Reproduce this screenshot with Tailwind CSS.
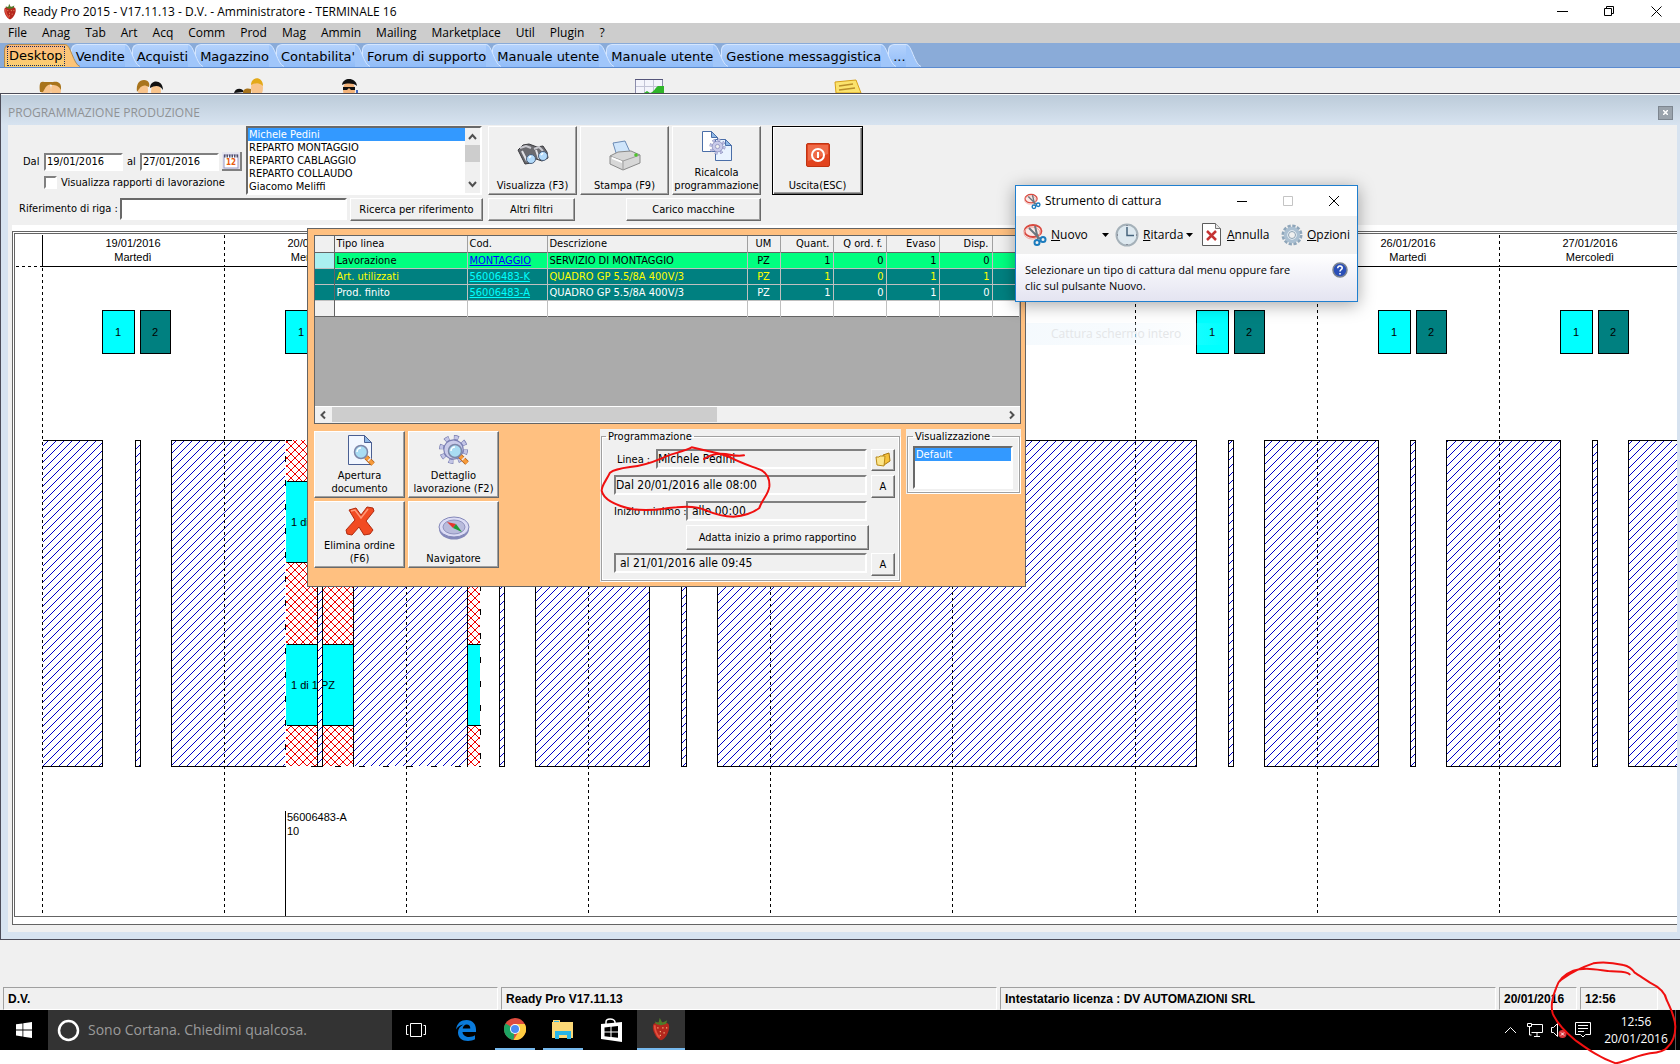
<!DOCTYPE html>
<html lang="it">
<head>
    <meta charset="UTF-8">
    <meta name="viewport" content="width=device-width, initial-scale=1.0">
    <title>Ready Pro 2015</title>
    <script src="https://cdn.jsdelivr.net/npm/@tailwindcss/browser@4"></script>
</head>
<body class="bg-white">
<div class="relative flex min-h-screen flex-col overflow-hidden pb-[14px] font-['DejaVu_Sans_Condensed','DejaVu_Sans',sans-serif] text-[11px] leading-[13px] text-black">

    <!-- Shared icons -->
    <svg class="hidden">
        <symbol id="strawberry" viewBox="0 0 16 18">
            <path d="M2 5C0 9 4 17 8 18c4-1 8-9 6-13-2-2-10-2-12 0z" fill="#b5271d"/>
            <path d="M3 6c0 4 2 8 4 10" stroke="#e2503f" stroke-width="1.5" fill="none"/>
            <path d="M3 3l3 1 1-4 2 4 4-2-1 3-4 1-4-1z" fill="#4d7d2a"/>
            <path d="M5 8h1M9 8h1M12 8h1M7 11h1M10 12h1M7 14h1" stroke="#f3b27c"/>
        </symbol>
        <symbol id="gear" viewBox="0 0 32 32">
            <circle cx="16" cy="16" r="12.500" fill="none" stroke="#7378ad" stroke-width="5" stroke-dasharray="4.900 4.920"/>
            <circle cx="16" cy="16" r="12.500" fill="none" stroke="#c3c5e6" stroke-width="3.500" stroke-dasharray="3.900 5.920" stroke-dashoffset="-.5"/>
            <circle cx="16" cy="16" r="10" fill="#c9cbea" stroke="#7a7eb2" stroke-width="1.200"/>
            <circle cx="16" cy="16" r="4" fill="#f0f0f0" stroke="#7a7eb2" stroke-width="1.200"/>
        </symbol>
        <symbol id="lens" viewBox="0 0 22 22">
            <path d="M13 13l7 7" stroke="#b05a10" stroke-width="5"/>
            <path d="M13 13l7 7" stroke="#f79b3a" stroke-width="3.500"/>
            <path d="M15 17l3-3" stroke="#e8e8f8" stroke-width="1.500"/>
            <circle cx="8" cy="8" r="6.500" fill="#a9dcf3" stroke="#7c86a8" stroke-width="1.500"/>
            <path d="M4 8a4 4 0 0 1 4-4" stroke="#fff" stroke-width="1.500" fill="none"/>
        </symbol>
        <symbol id="snip" viewBox="0 0 24 24">
            <ellipse cx="10" cy="8" rx="8.500" ry="6" fill="#fbe9e7" stroke="#d9493f" stroke-width="1.800"/>
            <ellipse cx="9" cy="10" rx="8" ry="6" fill="none" stroke="#f0aaa4" stroke-width="1"/>
            <path d="M6 5l11 11M12 3l3 13" stroke="#6d7880" stroke-width="2"/>
            <circle cx="14" cy="19.500" r="2.500" fill="none" stroke="#1b7bbd" stroke-width="2"/>
            <circle cx="20" cy="16.500" r="2.500" fill="none" stroke="#1b7bbd" stroke-width="2"/>
        </symbol>
    </svg>

    <!-- Title bar -->
    <header class="flex h-[23px] items-center bg-white pl-[3px] font-['Open_Sans',sans-serif] text-xs">
        <svg class="h-[17px] w-[14px]"><use href="#strawberry"/></svg>
        <h1 class="ml-1.5 flex-1 text-xs">Ready Pro 2015 - V17.11.13 - D.V. - Amministratore - TERMINALE 16</h1>
        <div class="flex gap-9 pr-[18px]">
            <button aria-label="Riduci"><svg class="size-[11px]" fill="none" stroke="#000"><path d="M0 5.500h11"/></svg></button>
            <button aria-label="Ripristina"><svg class="size-[11px]" fill="none" stroke="#000"><path d="M.5 2.500h7v7h-7zM2.500 2.500v-2h7v7h-2"/></svg></button>
            <button aria-label="Chiudi"><svg class="size-[11px]" fill="none" stroke="#000"><path d="M.5.5l10 10M10.500.5l-10 10"/></svg></button>
        </div>
    </header>

    <!-- Menu -->
    <nav class="flex h-5 items-center gap-[15px] bg-[#cdcdcd] pl-2 font-['Open_Sans',sans-serif] text-xs">
        <a href="#">File</a><a href="#">Anag</a><a href="#">Tab</a><a href="#">Art</a><a href="#">Acq</a><a href="#">Comm</a><a href="#">Prod</a><a href="#">Mag</a><a href="#">Ammin</a><a href="#">Mailing</a><a href="#">Marketplace</a><a href="#">Util</a><a href="#">Plugin</a><a href="#">?</a>
    </nav>

    <!-- Tabs -->
    <nav class="isolate flex h-[25px] items-end border-b border-[#5b8bd0] bg-[#8aabd8] pl-1 font-['DejaVu_Sans',sans-serif] text-[13px]">
        <button class="relative z-[10] flex h-[23px]"><span class="h-full rounded-tl-md border-t border-l border-[#b08a50] bg-linear-to-b from-[#fdb97c] to-[#fbd070] pt-px pl-0.5"><span class="block border border-dotted border-[#1a2a60] px-px leading-[18px]">Desktop</span></span><svg class="-mr-[10px] h-[23px] w-4"><path d="M0 0C6 0 8 20 15 23H0z" fill="#fcc477"/><path d="M0 .5C6 .5 8 20 15 22.500" fill="none" stroke="#b08a50"/></svg></button>
        <button class="relative z-[9] flex h-[23px]"><span class="h-full rounded-tl-md border-t border-l border-[#d4e6ff] bg-linear-to-b from-[#b4d2fc] to-[#90bcf8] pl-1 leading-[23px]">Vendite</span><svg class="-mr-[9px] h-[23px] w-4"><path d="M0 0C6 0 8 20 15 23H0z" fill="#a0c6fa"/><path d="M0 .5C6 .5 8 20 15 22.500" fill="none" stroke="#d4e6ff"/></svg></button>
        <button class="relative z-[8] flex h-[23px]"><span class="h-full rounded-tl-md border-t border-l border-[#d4e6ff] bg-linear-to-b from-[#b4d2fc] to-[#90bcf8] pl-1 leading-[23px]">Acquisti</span><svg class="-mr-[9px] h-[23px] w-4"><path d="M0 0C6 0 8 20 15 23H0z" fill="#a0c6fa"/><path d="M0 .5C6 .5 8 20 15 22.500" fill="none" stroke="#d4e6ff"/></svg></button>
        <button class="relative z-[7] flex h-[23px]"><span class="h-full rounded-tl-md border-t border-l border-[#d4e6ff] bg-linear-to-b from-[#b4d2fc] to-[#90bcf8] pl-1 leading-[23px]">Magazzino</span><svg class="-mr-[9px] h-[23px] w-4"><path d="M0 0C6 0 8 20 15 23H0z" fill="#a0c6fa"/><path d="M0 .5C6 .5 8 20 15 22.500" fill="none" stroke="#d4e6ff"/></svg></button>
        <button class="relative z-[6] flex h-[23px]"><span class="h-full rounded-tl-md border-t border-l border-[#d4e6ff] bg-linear-to-b from-[#b4d2fc] to-[#90bcf8] pl-1 leading-[23px]">Contabilita'</span><svg class="-mr-[9px] h-[23px] w-4"><path d="M0 0C6 0 8 20 15 23H0z" fill="#a0c6fa"/><path d="M0 .5C6 .5 8 20 15 22.500" fill="none" stroke="#d4e6ff"/></svg></button>
        <button class="relative z-[5] flex h-[23px]"><span class="h-full rounded-tl-md border-t border-l border-[#d4e6ff] bg-linear-to-b from-[#b4d2fc] to-[#90bcf8] pl-1 leading-[23px]">Forum di supporto</span><svg class="-mr-[10px] h-[23px] w-4"><path d="M0 0C6 0 8 20 15 23H0z" fill="#a0c6fa"/><path d="M0 .5C6 .5 8 20 15 22.500" fill="none" stroke="#d4e6ff"/></svg></button>
        <button class="relative z-[4] flex h-[23px]"><span class="h-full rounded-tl-md border-t border-l border-[#d4e6ff] bg-linear-to-b from-[#b4d2fc] to-[#90bcf8] pl-1 leading-[23px]">Manuale utente</span><svg class="-mr-[9px] h-[23px] w-4"><path d="M0 0C6 0 8 20 15 23H0z" fill="#a0c6fa"/><path d="M0 .5C6 .5 8 20 15 22.500" fill="none" stroke="#d4e6ff"/></svg></button>
        <button class="relative z-[3] flex h-[23px]"><span class="h-full rounded-tl-md border-t border-l border-[#d4e6ff] bg-linear-to-b from-[#b4d2fc] to-[#90bcf8] pl-1 leading-[23px]">Manuale utente</span><svg class="-mr-[8px] h-[23px] w-4"><path d="M0 0C6 0 8 20 15 23H0z" fill="#a0c6fa"/><path d="M0 .5C6 .5 8 20 15 22.500" fill="none" stroke="#d4e6ff"/></svg></button>
        <button class="relative z-[2] flex h-[23px]"><span class="h-full rounded-tl-md border-t border-l border-[#d4e6ff] bg-linear-to-b from-[#b4d2fc] to-[#90bcf8] pl-1 leading-[23px]">Gestione messaggistica</span><svg class="-mr-[9px] h-[23px] w-4"><path d="M0 0C6 0 8 20 15 23H0z" fill="#a0c6fa"/><path d="M0 .5C6 .5 8 20 15 22.500" fill="none" stroke="#d4e6ff"/></svg></button>
        <button class="relative z-[1] flex h-[23px]"><span class="h-full rounded-tl-md border-t border-l border-[#d4e6ff] bg-linear-to-b from-[#b4d2fc] to-[#90bcf8] pl-1 leading-[23px]">...</span><svg class="-mr-[9px] h-[23px] w-4"><path d="M0 0C6 0 8 20 15 23H0z" fill="#a0c6fa"/><path d="M0 .5C6 .5 8 20 15 22.500" fill="none" stroke="#d4e6ff"/></svg></button>
    </nav>

    <!-- Desktop icons, cut by the child window -->
    <svg class="h-[25px] w-full bg-[#f0f0f0]">
        <g stroke-width=".6">
            <ellipse cx="46" cy="22" rx="5" ry="8" fill="#f8c48c"/><path d="M40 24c-1-8 0-11 4-10h8c3 1 2 3 1 3-5-2-7 1-10 7z" fill="#a8741c"/>
            <ellipse cx="56" cy="22" rx="5" ry="8" fill="#f8c48c"/><path d="M51 15c3-2 10-2 10 4v3c-2-4-5-5-9-5z" fill="#a8741c"/>
            <ellipse cx="143" cy="22" rx="5" ry="8" fill="#f8c48c"/><path d="M137 24c-1-8 2-12 7-12s6 4 5 7c-5-3-8-2-12 5z" fill="#a8741c"/>
            <ellipse cx="156" cy="23" rx="5" ry="7" fill="#f8c48c"/><path d="M150 20c0-9 13-9 13 2-3-5-8-5-13-2z" fill="#111"/>
            <path d="M234 25c1-5 8-6 10-1z" fill="#111"/><path d="M243 25c0-5 5-5 8-4v4z" fill="#a8741c"/>
            <ellipse cx="257" cy="20" rx="6" ry="9" fill="#f8c48c"/><path d="M251 17c0-9 12-9 12 1-4-4-8-3-12-1z" fill="#e3a919"/>
            <ellipse cx="349" cy="22" rx="6" ry="9" fill="#f2b279"/><path d="M342 17c1-8 14-8 15 1-4-3-10-3-15-1z" fill="#111"/><path d="M343 19h12v3h-4l-2-2-2 2h-4z" fill="#111"/><path d="M356 22h2v3h-2z" fill="#456ac0"/>
        </g>
        <path d="M635.500 11.500h27v14h-27z" fill="#f4f4fb" stroke="#8b8cab"/>
        <path d="M644.500 12v13M653.500 12v13M636 18.500h26" stroke="#c3c4d6"/>
        <path d="M635 11.500h28" stroke="#55557a"/>
        <path d="M644 25l3-2 3 2c4-1 5-5 8-7h6v7z" fill="#2fb529"/>
        <path d="M835 14l21-2 5 13h-25z" fill="#fbe36c" stroke="#d6a019"/>
        <path d="M839 18l14-2M839 22l16-2" stroke="#b98f2b" stroke-width="1.500"/>
    </svg>

    <!-- Child window -->
    <main class="flex flex-1 flex-col border-y border-l border-[#4c4c58] bg-[#d7e3f0]">
        <div class="flex h-[31px] items-center border-t border-white bg-linear-to-b from-[#bccbd9] to-[#d7e3f0] pt-[5px] pr-[7px] pl-[7px] font-['Open_Sans',sans-serif]">
            <h2 class="flex-1 text-xs text-[#8f9295]">PROGRAMMAZIONE PRODUZIONE</h2>
            <button aria-label="Chiudi finestra" class="flex h-3.5 w-[15px] items-center justify-center border border-[#7d8690] bg-[#9aa3ac]"><svg class="size-[5px]" stroke="#fff" stroke-width="1.500"><path d="M0 0l5 5M5 0L0 5"/></svg></button>
        </div>
        <div class="mr-[3px] mb-[7px] ml-[7px] flex flex-1 flex-col bg-[#f0f0f0] pb-[7px]">

            <!-- Toolbar -->
            <form class="flex h-[100px] flex-col gap-[3px] pt-px">
                <div class="flex h-[69px]">
                    <div class="w-[238px] shrink-0 pt-[26px] pl-[15px]">
                        <div class="flex h-[19px] items-center">
                            <label for="from" class="w-[21px]">Dal</label>
                            <input id="from" value="19/01/2016" class="h-[18px] w-[79px] border-2 border-t-[#808080] border-r-white border-b-white border-l-[#808080] bg-white px-px">
                            <label for="to" class="w-[17px] pl-1">al</label>
                            <input id="to" value="27/01/2016" class="h-[18px] w-[79px] border-2 border-t-[#808080] border-r-white border-b-white border-l-[#808080] bg-white px-px">
                            <button type="button" aria-label="Calendario" class="ml-[3px] flex h-[19px] w-5 items-center justify-center border-r-2 border-b-2 border-[#808080] bg-[#e6e6ee]">
                                <svg class="size-4"><rect x="1" y="2" width="14" height="13" fill="#fff" stroke="#9a9ac8"/><path d="M1 3h14" stroke="#50506a" stroke-width="3" stroke-dasharray="1.500 1"/><text x="3" y="12" font-size="8" font-weight="700" fill="#e85a10">12</text></svg>
                            </button>
                        </div>
                        <div class="mt-[5px] flex items-center pl-[21px]">
                            <input id="reports" type="checkbox" class="size-[13px] appearance-none border-2 border-t-[#808080] border-r-white border-b-white border-l-[#808080] bg-white">
                            <label for="reports" class="ml-1">Visualizza rapporti di lavorazione</label>
                        </div>
                    </div>
                    <div class="flex w-[236px] shrink-0 border-2 border-t-[#696969] border-r-white border-b-white border-l-[#696969] bg-white">
                        <select size="5" aria-label="Reparti" class="flex-1 overflow-hidden [scrollbar-width:none]">
                            <option selected class="min-h-0 p-0 px-px leading-[13px] checked:bg-[#3399ff] checked:bg-linear-to-b checked:from-[#3399ff] checked:to-[#3399ff] checked:text-white">Michele Pedini</option>
                            <option class="min-h-0 p-0 px-px leading-[13px]">REPARTO MONTAGGIO</option>
                            <option class="min-h-0 p-0 px-px leading-[13px]">REPARTO CABLAGGIO</option>
                            <option class="min-h-0 p-0 px-px leading-[13px]">REPARTO COLLAUDO</option>
                            <option class="min-h-0 p-0 px-px leading-[13px]">Giacomo Meliffi</option>
                        </select>
                        <div class="flex w-[15px] flex-col items-center justify-between bg-[#f0f0f0]">
                            <svg class="h-[17px] w-[15px]" fill="none" stroke="#505050" stroke-width="2"><path d="M4 11l3.500-4 3.500 4"/></svg>
                            <span class="mb-auto h-[17px] w-full bg-[#cdcdcd]"></span>
                            <svg class="h-[17px] w-[15px]" fill="none" stroke="#505050" stroke-width="2"><path d="M4 6l3.500 4L11 6"/></svg>
                        </div>
                    </div>
                    <button type="button" class="ml-1.5 flex w-[89px] flex-col items-center justify-end border border-t-white border-r-[#696969] border-b-[#696969] border-l-white bg-[#f0f0f0] pb-0.5 shadow-[inset_-1px_-1px_0_#a0a0a0]">
                        <svg class="mb-2 h-8 w-8">
                            <path d="M1 11l5-5 6-1 8 3 6-1 4 6 1 6-6 3-6-2-3-4-2 8-6 1-3-6z" fill="#6b6b70" stroke="#3a3a3e"/>
                            <path d="M3 9l6-2 5 2M17 10l5-2 4 4" stroke="#c9c9cf" stroke-width="2" fill="none"/>
                            <path d="M5 12l5 10M19 11l3 9" stroke="#e2e2e6" stroke-width="2"/>
                            <circle cx="14" cy="20" r="4.500" fill="#b3dbfb" stroke="#4c5f7a"/><circle cx="26" cy="17" r="4.500" fill="#b3dbfb" stroke="#4c5f7a"/>
                            <path d="M12 19l2-2M24 16l2-2" stroke="#fff" stroke-width="1.500"/>
                        </svg>
                        Visualizza (F3)
                    </button>
                    <button type="button" class="ml-[3px] flex w-[89px] flex-col items-center justify-end border border-t-white border-r-[#696969] border-b-[#696969] border-l-white bg-[#f0f0f0] pb-0.5 shadow-[inset_-1px_-1px_0_#a0a0a0]">
                        <svg class="mb-2 h-8 w-8">
                            <path d="M4 4l12-2 5 11-13 4z" fill="#cfe5fb" stroke="#6b8bb5"/>
                            <path d="M1 17l8-4 13-1 9 4v8l-17 7-13-6z" fill="#d7d7d7" stroke="#8a8a8a"/>
                            <path d="M1 17l13 5 17-6M14 22v9" fill="none" stroke="#9d9d9d"/>
                            <path d="M3 18l10 4v2L3 20z" fill="#fff"/><circle cx="27" cy="16" r="1.800" fill="#4fc52c"/>
                        </svg>
                        Stampa (F9)
                    </button>
                    <button type="button" class="ml-[3px] flex w-[89px] flex-col items-center justify-end border border-t-white border-r-[#696969] border-b-[#696969] border-l-white bg-[#f0f0f0] pb-0.5 shadow-[inset_-1px_-1px_0_#a0a0a0]">
                        <svg class="mb-1 h-8 w-8">
                            <path d="M1.500 1.500h9l6 6v14h-15z" fill="#fff" stroke="#4a6ea8"/><path d="M10.500 1.500v6h6z" fill="#8fb8e6" stroke="#4a6ea8"/>
                            <path d="M14.500 9.500h10l6 6v15h-16z" fill="#e9f3ff" stroke="#4a6ea8"/><path d="M24.500 9.500v6h6z" fill="#8fb8e6" stroke="#4a6ea8"/>
                            <use href="#gear" x="8" y="8" width="17" height="17"/>
                        </svg>
                        Ricalcola<br>programmazione
                    </button>
                    <button type="button" class="ml-[11px] flex w-[91px] flex-col items-center justify-end border border-black bg-[#f0f0f0] pb-0.5 shadow-[inset_1px_1px_0_#fff,inset_-1px_-1px_0_#696969,inset_-2px_-2px_0_#a0a0a0]">
                        <svg class="mb-3 h-6 w-6">
                            <rect x=".5" y=".5" width="23" height="23" rx="1.500" fill="#e2441f" stroke="#bf3413"/><path d="M2 2h20v9L2 18z" fill="#ef6b48"/>
                            <circle cx="12" cy="12" r="6" fill="none" stroke="#fff" stroke-width="2"/><path d="M12 9v6" stroke="#fff" stroke-width="2"/>
                        </svg>
                        Uscita(ESC)
                    </button>
                </div>
                <div class="flex h-6 items-start pl-[11px]">
                    <label for="ref" class="w-[101px] pt-1">Riferimento di riga :</label>
                    <input id="ref" class="h-[22px] w-[227px] border-2 border-t-[#696969] border-r-white border-b-white border-l-[#696969] bg-white px-1">
                    <button type="button" class="ml-[3px] h-[23px] w-[133px] border border-t-white border-r-[#696969] border-b-[#696969] border-l-white bg-[#f0f0f0] shadow-[inset_-1px_-1px_0_#a0a0a0]">Ricerca per riferimento</button>
                    <button type="button" class="ml-[5px] h-[23px] w-[87px] border border-t-white border-r-[#696969] border-b-[#696969] border-l-white bg-[#f0f0f0] shadow-[inset_-1px_-1px_0_#a0a0a0]">Altri filtri</button>
                    <button type="button" class="ml-[51px] h-[23px] w-[135px] border border-t-white border-r-[#696969] border-b-[#696969] border-l-white bg-[#f0f0f0] shadow-[inset_-1px_-1px_0_#a0a0a0]">Carico macchine</button>
                </div>
            </form>

            <!-- Gantt -->
            <div class="ml-1 flex flex-1 flex-col bg-white pt-1.5">
                <div class="flex-1 border-y border-l border-[#646464] pt-px pb-[7px] pl-px">
                    <div class="border-y border-l border-[#646464]">
                        <svg id="gantt" class="block h-[682px] w-full font-['Liberation_Sans',sans-serif] text-[11px]" shape-rendering="crispEdges">
                            <defs>
                                <pattern id="blue" width="8" height="8" patternUnits="userSpaceOnUse">
                                    <path d="M0 7h1v1H0zM1 6h1v1H1zM2 5h1v1H2zM3 4h1v1H3zM4 3h1v1H4zM5 2h1v1H5zM6 1h1v1H6zM7 0h1v1H7z" fill="#0000c8"/>
                                </pattern>
                                <pattern id="red" width="8" height="8" patternUnits="userSpaceOnUse">
                                    <path d="M0 7h1v1H0zM1 6h1v1H1zM2 5h1v1H2zM3 4h1v1H3zM4 3h1v1H4zM5 2h1v1H5zM6 1h1v1H6zM7 0h1v1H7zM0 0h1v1H0zM1 1h1v1H1zM2 2h1v1H2zM3 3h1v1H3zM4 4h1v1H4zM5 5h1v1H5zM6 6h1v1H6zM7 7h1v1H7z" fill="#f00000"/>
                                </pattern>
                            </defs>
                        </svg>
                    </div>
                </div>
            </div>
        </div>
    </main>
    <div class="h-[47px] bg-[#f0f0f0]"></div>

    <!-- Status bar -->
    <footer class="flex h-[23px] gap-[3px] bg-[#f0f0f0] pr-[22px] pl-[3px] font-['Liberation_Sans',sans-serif] text-xs leading-[22px] font-bold">
        <div class="w-[495px] border border-t-[#a0a0a0] border-r-white border-b-white border-l-[#a0a0a0] pl-1">D.V.</div>
        <div class="w-[496px] border border-t-[#a0a0a0] border-r-white border-b-white border-l-[#a0a0a0] pl-1">Ready Pro V17.11.13</div>
        <div class="flex-1 border border-t-[#a0a0a0] border-r-white border-b-white border-l-[#a0a0a0] pl-1">Intestatario licenza : DV AUTOMAZIONI SRL</div>
        <div class="w-[78px] border border-t-[#a0a0a0] border-r-white border-b-white border-l-[#a0a0a0] pl-1">20/01/2016</div>
        <div class="w-[78px] border border-t-[#a0a0a0] border-r-white border-b-white border-l-[#a0a0a0] pl-1">12:56</div>
    </footer>

    <!-- Taskbar -->
    <div class="flex h-10 bg-black font-['Open_Sans',sans-serif] text-white">
        <button aria-label="Start" class="flex w-12 items-center justify-center"><svg class="size-4" fill="#fff"><path d="M0 2.300L6.500 1.400v6.100H0zM7.300 1.300L16 0v7.500H7.300zM0 8.400h6.500v6.100L0 13.600zM7.300 8.400H16V16l-8.700-1.200z"/></svg></button>
        <label class="flex w-[344px] items-center bg-[#333] pl-[9px]">
            <svg class="size-[23px]"><circle cx="11.500" cy="11.500" r="9.500" fill="none" stroke="#fff" stroke-width="2.500"/></svg>
            <input aria-label="Cerca" placeholder="Sono Cortana. Chiedimi qualcosa." class="ml-2 flex-1 text-sm placeholder:text-[#9b9b9b]">
        </label>
        <button aria-label="Visualizzazione attività" class="flex w-12 items-center justify-center"><svg class="h-4 w-5" fill="none" stroke="#fff"><path d="M4.500 1.500h11v13h-11zM2.500 3.500h-2v9h2M17.500 3.500h2v9h-2"/></svg></button>
        <button aria-label="Edge" class="flex w-[51px] items-center justify-center"><svg class="h-[21px] w-5"><path d="M0 9.500C1 3 5 0 10.500 0 17 0 20 4.500 20 9.500V12H6.500c.3 3.500 3.500 5 6.500 5 2.500 0 4.500-.7 6-1.700v4C17 20.500 14.500 21 12 21 6 21 2 17.500 2 12.500 2 9 4 6 7.500 4.500 4.500 4.800 1.800 6.500 0 9.500zM6.700 8.500h7.600C14.300 6 13 4.500 10.700 4.500 8.500 4.500 7 6.200 6.700 8.500z" fill="#0a7bdc"/></svg></button>
        <button aria-label="Chrome" class="mr-2 ml-1 flex w-10 items-center justify-center border-b-2 border-[#76b9ed]"><svg class="size-[22px]"><circle cx="11" cy="11" r="11" fill="#dd4b3e"/><path d="M11 11L1.500 5.500A11 11 0 0 0 9.500 22z" fill="#1da362"/><path d="M11 6h9.800A11 11 0 0 1 9.500 22L15 13z" fill="#ffcd42"/><circle cx="11" cy="11" r="5" fill="#fff"/><circle cx="11" cy="11" r="4" fill="#4b8bf5"/></svg></button>
        <button aria-label="Esplora file" class="flex w-10 items-center justify-center border-b-2 border-[#76b9ed]"><svg class="h-[19px] w-[22px]"><path d="M0 2h1V0h7v2h13v16H0z" fill="#fbd876"/><path d="M2 1h5v1H2z" fill="#37b8e8"/><path d="M3 19v-8h16v8h-4v-4H7v4z" fill="#29b5e8"/></svg></button>
        <button aria-label="Store" class="mr-0.5 ml-1 flex w-12 items-center justify-center"><svg class="h-6 w-[21px]"><path d="M0 6l21-2v20L0 21z" fill="#fff"/><path d="M5 6V4c0-4 8-4 9 0v1" fill="none" stroke="#fff" stroke-width="1.500"/><path d="M3.500 9.500l6-.7v4.700h-6zM10.500 8.700l6.500-.7v5.500h-6.500zM3.500 14.500h6v4.400l-6-.7zM10.500 14.500H17v5.200l-6.500-.7z" fill="#000"/></svg></button>
        <button aria-label="Ready Pro" class="flex w-12 items-center justify-center border-b-2 border-[#76b9ed] bg-[#333]"><svg class="h-6 w-5"><use href="#strawberry"/></svg></button>
        <div class="ml-auto flex items-center gap-2 pr-1">
            <svg class="h-3 w-4" fill="none" stroke="#fff"><path d="M2 9l5.500-5.500L13 9"/></svg>
            <svg class="h-4 w-4" fill="none" stroke="#fff"><path d="M4.500 2.500h11v8h-11M.5 1.500h4v3h-4zM2.500 5v8h2M10 11v3M7 14.500h6"/></svg>
            <svg class="h-4 w-4" fill="none" stroke="#fff"><path d="M.5 5.500h2l4-4v13l-4-4h-2z"/><circle cx="11.500" cy="12" r="4" fill="#d8343a" stroke="none"/><path d="M10 10.500l3 3M13 10.500l-3 3"/></svg>
            <svg class="h-4 w-4" fill="none" stroke="#fff"><path d="M.5.5h15v12h-5L8 15l-2.500-2.500h-5zM3 3.500h10M3 6.500h10M3 9.500h6"/></svg>
            <div class="-mr-1.5 w-[74px] text-center text-xs leading-[17px]"><p>12:56</p><p>20/01/2016</p></div>
            <span class="h-10 border-l border-[#555]"></span>
        </div>
    </div>

    <!-- Order dialog -->
    <section class="absolute top-[228px] left-[307px] w-[719px] border border-[#646464] bg-[#ffc080] pt-1.5 pb-1 pl-1.5">
        <div class="mr-1 border border-[#646464] bg-[#ababab]">
            <table class="w-full table-fixed border-collapse border-b border-[#646464] leading-[15px]">
                <thead>
                    <tr class="h-4 border-b border-[#646464] bg-[#f0f0f0] text-left">
                        <th class="w-[19px] border-r border-[#646464]"></th>
                        <th class="w-[133px] border-r border-[#a0a0a0] pl-0.5 font-normal">Tipo linea</th>
                        <th class="w-20 border-r border-[#a0a0a0] pl-0.5 font-normal">Cod.</th>
                        <th class="w-[200px] border-r border-[#a0a0a0] pl-0.5 font-normal">Descrizione</th>
                        <th class="w-[33px] border-r border-[#a0a0a0] text-center font-normal">UM</th>
                        <th class="w-[53px] border-r border-[#a0a0a0] pr-[3px] text-right font-normal">Quant.</th>
                        <th class="w-[53px] border-r border-[#a0a0a0] pr-[3px] text-right font-normal whitespace-nowrap">Q ord. f.</th>
                        <th class="w-[53px] border-r border-[#a0a0a0] pr-[3px] text-right font-normal">Evaso</th>
                        <th class="w-[53px] border-r border-[#a0a0a0] pr-[3px] text-right font-normal">Disp.</th>
                        <th></th>
                    </tr>
                </thead>
                <tbody class="[&_td]:border-r [&_td]:border-[#c0c0c0] [&_td]:px-0.5 [&_td:first-child]:border-[#646464]">
                    <tr class="h-4 border-b border-[#c0c0c0] bg-[#00ff80]"><td class="bg-[#aaf0f0]"></td><td>Lavorazione</td><td><a href="#" class="text-[#0000ff] underline">MONTAGGIO</a></td><td>SERVIZIO DI MONTAGGIO</td><td class="text-center">PZ</td><td class="text-right">1</td><td class="text-right">0</td><td class="text-right">1</td><td class="text-right">0</td><td></td></tr>
                    <tr class="h-4 border-b border-[#c0c0c0] bg-[#008080] text-[#ffff00]"><td></td><td>Art. utilizzati</td><td><a href="#" class="text-[#00ffff] underline">56006483-K</a></td><td>QUADRO GP 5.5/8A 400V/3</td><td class="text-center">PZ</td><td class="text-right">1</td><td class="text-right">0</td><td class="text-right">1</td><td class="text-right">1</td><td></td></tr>
                    <tr class="h-4 border-b border-[#c0c0c0] bg-[#008080] text-white"><td></td><td>Prod. finito</td><td><a href="#" class="text-[#00ffff] underline">56006483-A</a></td><td>QUADRO GP 5.5/8A 400V/3</td><td class="text-center">PZ</td><td class="text-right">1</td><td class="text-right">0</td><td class="text-right">1</td><td class="text-right">0</td><td></td></tr>
                    <tr class="h-4 bg-white"><td class="bg-[#f0f0f0]"></td><td></td><td></td><td></td><td></td><td></td><td></td><td></td><td></td><td></td></tr>
                </tbody>
            </table>
            <div class="mt-[89px] flex h-[17px] items-center border-t border-white bg-[#f0f0f0]">
                <svg class="h-4 w-[17px]" fill="none" stroke="#505050" stroke-width="2"><path d="M10 4.500L6.500 8l3.500 3.500"/></svg>
                <span class="h-[15px] w-[385px] bg-[#cdcdcd]"></span>
                <svg class="ml-auto h-4 w-[17px]" fill="none" stroke="#505050" stroke-width="2"><path d="M7 4.500L10.500 8 7 11.500"/></svg>
            </div>
        </div>
        <div class="mt-[5px] flex items-start">
            <div class="grid grid-cols-[91px_91px] gap-[3px] pt-0.5">
                <button class="flex h-[67px] flex-col items-center justify-end border border-t-white border-r-[#696969] border-b-[#696969] border-l-white bg-[#f0f0f0] pb-0.5 shadow-[inset_-1px_-1px_0_#a0a0a0]">
                    <svg class="mb-[3px] h-8 w-8"><path d="M4.500 1.500h16l7 7v22h-23z" fill="#f2f7ff" stroke="#4a5f92"/><path d="M20.500 1.500v7h7z" fill="#8fb8e6" stroke="#4a5f92"/><use href="#lens" x="9" y="10" width="22" height="22"/></svg>
                    Apertura<br>documento
                </button>
                <button class="flex h-[67px] flex-col items-center justify-end border border-t-white border-r-[#696969] border-b-[#696969] border-l-white bg-[#f0f0f0] pb-0.5 shadow-[inset_-1px_-1px_0_#a0a0a0]">
                    <svg class="mb-[3px] h-8 w-8"><use href="#gear" width="31" height="31"/><use href="#lens" x="9" y="9" width="22" height="22"/></svg>
                    Dettaglio<br>lavorazione (F2)
                </button>
                <button class="flex h-[67px] flex-col items-center justify-end border border-t-white border-r-[#696969] border-b-[#696969] border-l-white bg-[#f0f0f0] pb-0.5 shadow-[inset_-1px_-1px_0_#a0a0a0]">
                    <svg class="mb-0.5 h-8 w-8"><path d="M5 5l7-2 5 7 6-8 6 1 1 3-8 10 7 9-3 4-6 1-5-8-7 8-5-1-1-4 9-10z" fill="#f24b22" stroke="#b02a0e" stroke-linejoin="round"/><path d="M7 6l4-1 6 8 7-9" fill="none" stroke="#ff9a78" stroke-width="1.500"/></svg>
                    Elimina ordine<br>(F6)
                </button>
                <button class="flex h-[67px] flex-col items-center justify-end border border-t-white border-r-[#696969] border-b-[#696969] border-l-white bg-[#f0f0f0] pb-0.5 shadow-[inset_-1px_-1px_0_#a0a0a0]">
                    <svg class="mb-3 h-6 w-8"><ellipse cx="16" cy="13" rx="15" ry="10.500" fill="#8488ba"/><ellipse cx="16" cy="11" rx="15" ry="10" fill="#dcdcf5" stroke="#8387b8"/><ellipse cx="16" cy="11" rx="11" ry="7" fill="#b9bbdc" stroke="#8f92bd"/><path d="M9 6l9 2-3 4z" fill="#e5352a"/><path d="M24 16l-9-4 3-4z" fill="#1f9a35"/></svg>
                    Navigatore
                </button>
            </div>
            <div class="ml-auto h-[153px] w-[301px] bg-[#f0f0f0] px-px pt-px">
                <fieldset class="h-[151px] border border-[#a0a0a0] pr-1 pl-3 shadow-[1px_1px_0_#fff,inset_0_0_0_1px_#fff]">
                    <legend class="-ml-2 px-0.5">Programmazione</legend>
                    <div class="mt-1.5 flex items-start">
                        <label for="linea" class="w-[42px] pt-1 pl-[3px]">Linea :</label>
                        <input id="linea" readonly value="Michele Pedini" class="h-5 w-0 flex-1 border-2 border-t-[#808080] border-r-white border-b-white border-l-[#808080] bg-[#f0f0f0] text-xs">
                        <button aria-label="Scegli linea" class="ml-1 flex h-[22px] w-6 items-center justify-center border border-t-white border-r-[#696969] border-b-[#696969] border-l-white shadow-[inset_-1px_-1px_0_#a0a0a0]"><svg class="h-[15px] w-4"><path d="M8 3l6-2 1 8-6 4z" fill="#f5c13a" stroke="#a87812"/><path d="M1 5h3l1-1h5l-1 10-7-1z" fill="#fce58a" stroke="#b98a18"/></svg></button>
                    </div>
                    <div class="mt-1 flex items-start">
                        <input readonly aria-label="Inizio" value="Dal 20/01/2016 alle 08:00" class="h-5 w-0 flex-1 border-2 border-t-[#808080] border-r-white border-b-white border-l-[#808080] bg-[#f0f0f0] text-xs">
                        <button class="ml-1 h-[23px] w-6 border border-t-white border-r-[#696969] border-b-[#696969] border-l-white shadow-[inset_-1px_-1px_0_#a0a0a0]">A</button>
                    </div>
                    <div class="mt-[3px] flex items-start pr-7">
                        <label for="minimo" class="w-[72px] pt-1 whitespace-nowrap">Inizio minimo :</label>
                        <input id="minimo" readonly value="alle 00:00" class="h-5 w-0 flex-1 border-2 border-t-[#808080] border-r-white border-b-white border-l-[#808080] bg-[#f0f0f0] pl-1 text-xs">
                    </div>
                    <button class="mt-1 ml-[72px] block h-[25px] w-[183px] border border-t-white border-r-[#696969] border-b-[#696969] border-l-white shadow-[inset_-1px_-1px_0_#a0a0a0]">Adatta inizio a primo rapportino</button>
                    <div class="mt-[3px] flex items-start">
                        <input readonly aria-label="Fine" value="al 21/01/2016 alle 09:45" class="h-5 w-0 flex-1 border-2 border-t-[#808080] border-r-white border-b-white border-l-[#808080] bg-[#f0f0f0] pl-1 text-xs">
                        <button class="ml-1 h-[23px] w-6 border border-t-white border-r-[#696969] border-b-[#696969] border-l-white shadow-[inset_-1px_-1px_0_#a0a0a0]">A</button>
                    </div>
                </fieldset>
            </div>
            <div class="mr-1 ml-[5px] h-[65px] w-[115px] bg-[#f0f0f0] px-px pt-px">
                <fieldset class="h-[63px] border border-[#a0a0a0] px-[5px] shadow-[1px_1px_0_#fff,inset_0_0_0_1px_#fff]">
                    <legend class="px-0.5">Visualizzazione</legend>
                    <select size="3" aria-label="Visualizzazione" class="mt-[3px] h-[43px] w-[100px] overflow-hidden border-2 border-t-[#696969] border-r-white border-b-white border-l-[#696969] bg-white [scrollbar-width:none]">
                        <option selected class="min-h-0 p-0 px-px leading-[13px] checked:bg-[#3399ff] checked:bg-linear-to-b checked:from-[#3399ff] checked:to-[#3399ff] checked:text-white">Default</option>
                    </select>
                </fieldset>
            </div>
        </div>
        <!-- hand-drawn mark round the start date -->
        <svg class="pointer-events-none absolute top-[191px] left-[282px] h-[180px] w-[200px]" viewBox="0 0 600 540" fill="none" stroke="#f01010" stroke-width="6" stroke-linecap="round" stroke-linejoin="round">
            <path d="M462 106C430 112 420 98 380 102C360 104 350 112 342 117M437 120C410 105 380 98 350 92L305 82C280 95 240 102 215 115C180 130 150 138 120 141C90 145 70 150 60 158C50 180 35 195 35 212C40 235 70 255 130 268C190 276 220 264 260 262C290 258 320 258 350 272C380 285 410 290 430 290C460 288 490 278 508 264C515 240 535 225 538 200C540 175 530 160 515 151C490 140 450 130 405 104"/>
        </svg>
    </section>

    <!-- fading menu entry -->
    <div class="absolute top-[323px] left-[1026px] h-[22px] w-[200px] bg-linear-to-r from-[#e6f2fb]/40 via-[#e6f2fb]/30 to-[#e6f2fb]/0 pl-[25px] font-['Open_Sans',sans-serif] text-xs leading-[21px] text-[#e4e6e8]">Cattura schermo intero</div>

    <!-- Snipping tool -->
    <section class="absolute top-[185px] left-[1015px] w-[343px] border border-[#1f7fcf] bg-white font-['Open_Sans',sans-serif] text-xs shadow-[0_3px_16px_rgba(0,0,0,.35)]">
        <div class="flex h-[30px] items-center pr-[18px] pl-2">
            <svg class="size-[17px]"><use href="#snip"/></svg>
            <h2 class="ml-1 flex-1 text-xs">Strumento di cattura</h2>
            <button aria-label="Riduci" class="mr-9"><svg class="size-[10px]" stroke="#000"><path d="M0 5.500h10"/></svg></button>
            <button aria-label="Ingrandisci" disabled class="mr-9"><svg class="size-[10px]" fill="none" stroke="#c4c4c4"><path d="M.5.5h9v9h-9z"/></svg></button>
            <button aria-label="Chiudi"><svg class="size-[10px]" stroke="#000"><path d="M0 0l10 10M10 0L0 10"/></svg></button>
        </div>
        <div class="flex h-[38px] items-center bg-[#f0f0f0] pl-[7px]">
            <button class="flex w-[92px] items-center"><svg class="mr-1 size-6"><use href="#snip"/></svg><span><u>N</u>uovo</span><svg class="mr-1.5 ml-auto h-1 w-[7px]"><path d="M0 0h7L3.500 4z"/></svg></button>
            <button class="flex w-[86px] items-center"><svg class="mr-1 size-6"><circle cx="12" cy="12" r="10.500" fill="#dde8ef" stroke="#a5b1b9" stroke-width="2"/><path d="M12 4v8.500h7" fill="none" stroke="#45637c" stroke-width="1.500"/><path d="M12 2v1M12 21v1M2 12h1M21 12h1" stroke="#556"/></svg><span><u>R</u>itarda</span><svg class="mr-2 ml-auto h-1 w-[7px]"><path d="M0 0h7L3.500 4z"/></svg></button>
            <button class="flex w-[78px] items-center"><svg class="mr-1.5 ml-px h-6 w-[19px]"><path d="M.5.500h13l5 5v17h-18z" fill="#fff" stroke="#5c5c5c"/><path d="M13.500.5v5h5" fill="#e6e6e6" stroke="#777"/><path d="M5 8l9 9M14 8l-9 9" stroke="#c53434" stroke-width="2.500"/></svg><span><u>A</u>nnulla</span></button>
            <button class="flex items-center"><svg class="mr-1 ml-0.5 size-[22px]"><circle cx="11" cy="11" r="8.500" fill="none" stroke="#8fa6ba" stroke-width="4" stroke-dasharray="3 1.450"/><circle cx="11" cy="11" r="6.500" fill="#eef4f9" stroke="#abc0d2" stroke-width="3.500"/><circle cx="11" cy="11" r="3.500" fill="#f0f0f0" stroke="#8ea3b5"/></svg><span><u>O</u>pzioni</span></button>
        </div>
        <div class="flex h-[47px] items-start bg-linear-to-b from-white to-[#e4e4f1] pt-2 pr-[9px] pl-[9px]">
            <p class="flex-1 text-[11px] leading-4">Selezionare un tipo di cattura dal menu oppure fare<br>clic sul pulsante Nuovo.</p>
            <button aria-label="Guida"><svg class="size-4"><circle cx="8" cy="8" r="7" fill="#2a4fb8" stroke="#7b8390" stroke-width="1.500"/><path d="M5.700 6.200c.3-3.200 4.800-2.600 4.500 0-.2 1.500-2.200 1.500-2.200 3.200M8 11v1.500" fill="none" stroke="#fff" stroke-width="1.600"/></svg></button>
        </div>
    </section>

    <!-- hand-drawn mark round the clock -->
    <svg class="pointer-events-none absolute right-0 bottom-0 h-[104px] w-[130px]" viewBox="0 0 390 312" fill="none" stroke="#f01010" stroke-width="6" stroke-linecap="round" stroke-linejoin="round">
        <path d="M239 43C230 32 200 36 175 33C140 28 100 22 70 32C45 42 25 60 18 85C8 110 2 140 8 160C20 190 45 215 75 240C110 265 150 295 198 310C240 300 265 285 300 280C330 277 345 272 352 262C370 245 376 225 376 200C375 170 362 145 350 120C345 95 325 80 300 68C280 55 265 45 254 38C245 25 235 18 220 15C190 8 160 4 130 10C100 20 60 40 35 58L28 65"/>
    </svg>
</div>

<script>
    const svg = document.getElementById('gantt');
    const giorni = [
        { x: 27, data: '19/01/2016', nome: 'Martedì', lavoro: true },
        { x: 209, data: '20/01/2016', nome: 'Mercoledì', lavoro: true },
        { x: 391, data: '21/01/2016', nome: 'Giovedì', lavoro: true },
        { x: 573, data: '22/01/2016', nome: 'Venerdì', lavoro: true },
        { x: 755, data: '23/01/2016', nome: 'Sabato', lavoro: false },
        { x: 937, data: '24/01/2016', nome: 'Domenica', lavoro: false },
        { x: 1120, data: '25/01/2016', nome: 'Lunedì', lavoro: true },
        { x: 1302, data: '26/01/2016', nome: 'Martedì', lavoro: true },
        { x: 1484, data: '27/01/2016', nome: 'Mercoledì', lavoro: true }
    ];
    const TOP = 206, BOTTOM = 532;
    let out = '';

    function line(x1, y1, x2, y2, dash) {
        out += `<path d="M${x1 + .5} ${y1 + .5}L${x2 + .5} ${y2 + .5}" stroke="#000" ${dash ? `stroke-dasharray="${dash}"` : ''}/>`;
    }
    function box(x1, y1, x2, y2, fill, stroke = '#000') {
        out += `<rect x="${x1 + .5}" y="${y1 + .5}" width="${x2 - x1}" height="${y2 - y1}" fill="${fill}" stroke="${stroke}"/>`;
    }
    function label(x, y, text, anchor = 'start') {
        out += `<text x="${x}" y="${y}" text-anchor="${anchor}">${text}</text>`;
    }

    // closed hours
    box(27, TOP, 87, BOTTOM, 'url(#blue)');
    box(156, TOP, 270, BOTTOM, 'url(#blue)');
    box(520, TOP, 634, BOTTOM, 'url(#blue)');
    box(702, TOP, 1181, BOTTOM, 'url(#blue)');
    box(1249, TOP, 1363, BOTTOM, 'url(#blue)');
    box(1431, TOP, 1545, BOTTOM, 'url(#blue)');
    box(1613, TOP, 2600, BOTTOM, 'url(#blue)');
    out += `<path d="M27.500 206V532" stroke="#fff"/>`;
    out += `<rect x="338" y="${TOP}" width="114" height="326" fill="url(#blue)"/>`;

    // running order
    [[271, 338], [452, 465]].forEach(([a, b]) => {
        out += `<rect x="${a}" y="${TOP}" width="${b - a}" height="326" fill="url(#red)"/>`;
        [[247, 328], [410, 491]].forEach(([c, d]) => {
            out += `<rect x="${a}" y="${c}" width="${b - a}" height="${d - c}" fill="#00ffff"/>`;
            line(a, c, b, c);
            line(a, d, b, d);
        });
    });
    label(276, 292, '1 di 1 PZ');
    label(276, 455, '1 di 1 PZ');
    line(338, TOP, 338, BOTTOM);
    line(452, TOP, 452, BOTTOM);
    out += `<path d="M270.500 206V532" stroke="#fff"/>`;
    line(270, 221, 270, BOTTOM, '6 18');
    line(465, TOP, 465, BOTTOM, '6 18');
    line(270, TOP, 465, TOP, '6 18');
    line(295, BOTTOM, 465, BOTTOM, '6 18');

    giorni.forEach((g, i) => {
        line(g.x, 33, g.x, 680, '3 3');
        label(g.x + 91, 13, g.data, 'middle');
        label(g.x + 91, 27, g.nome, 'middle');
        if (!g.lavoro) return;
        out += `<rect x="${g.x + 93}" y="${TOP}" width="6" height="326" fill="#fff"/>`;
        box(g.x + 93, TOP, g.x + 98, BOTTOM, 'url(#blue)');
        const x = i ? g.x + 1 : g.x;
        box(x + 60, 76, x + 92, 119, '#00ffff');
        box(x + 98, 76, x + 128, 119, '#008080');
        label(x + 76, 102, '1', 'middle');
        label(x + 113, 102, '2', 'middle');
    });
    giorni.slice(1).forEach((g) => line(g.x, 0, g.x, 32, '3 3'));

    // header rule and order marker
    line(27, 0, 27, 32);
    line(0, 32, 27, 32, '3 3');
    line(27, 32, 2600, 32);
    line(270, 576, 270, 682);
    label(272, 587, '56006483-A');
    label(272, 601, '10');

    svg.insertAdjacentHTML('beforeend', out);
</script>
</body>
</html>
